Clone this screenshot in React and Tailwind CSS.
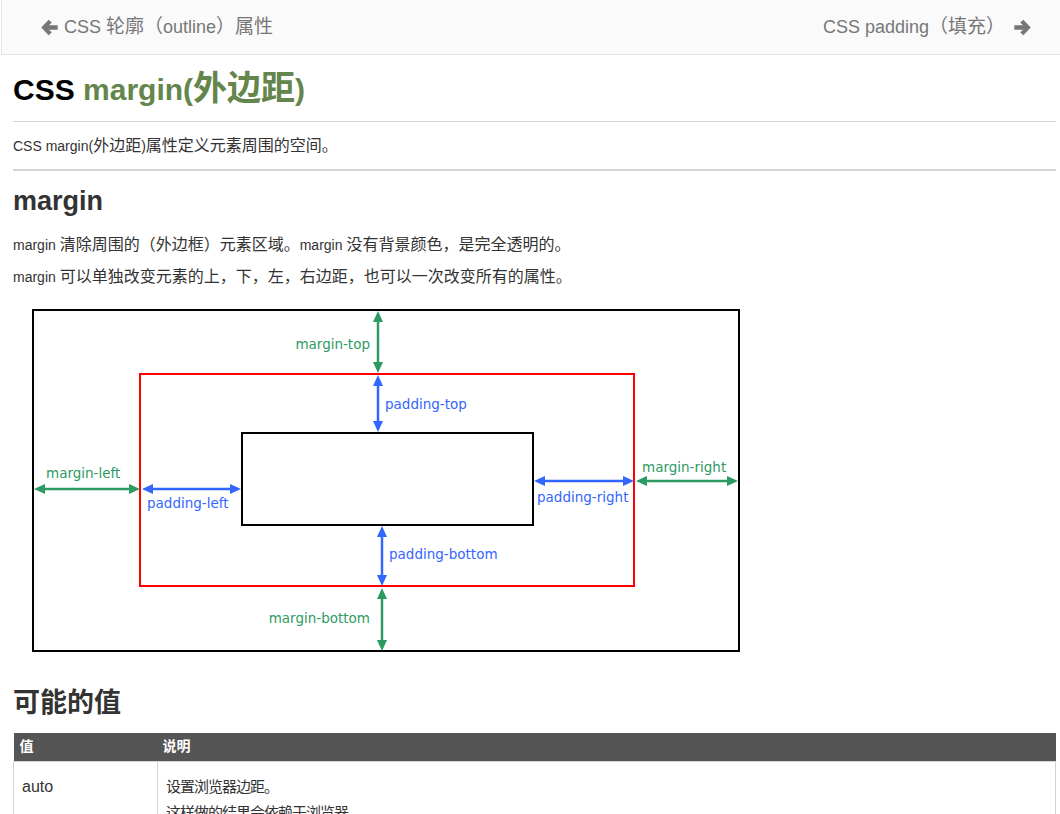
import React from "react";

const FONT = { fontFamily: '"Liberation Sans", Arial, "Noto Sans CJK SC", sans-serif' };
const GREEN = "#2e9a63";
const BLUE = "#3366ff";

// splits a string into latin / CJK runs so the CJK runs can get their own size
const CJK_RE = /([\u3000-\u303f\u4e00-\u9fff\uff00-\uffef]+)/;
function Mixed({ text, cjk }) {
  return text.split(CJK_RE).map((part, i) =>
    i % 2 === 1 ? (
      <span key={i} className={cjk}>
        {part}
      </span>
    ) : (
      part
    )
  );
}

function NavArrow({ dir }) {
  return (
    <svg width="17" height="17" viewBox="0 0 16 16" className="shrink-0">
      <path
        d={
          dir === "left"
            ? "M7.2 1 L0.6 8 L7.2 15 L9.8 12.6 L7 9.8 H15.4 V6.2 H7 L9.8 3.4 Z"
            : "M8.8 1 L15.4 8 L8.8 15 L6.2 12.6 L9 9.8 H0.6 V6.2 H9 L6.2 3.4 Z"
        }
        fill="#777"
        stroke="#777"
        strokeWidth="0.6"
        strokeLinejoin="round"
      />
    </svg>
  );
}

// double-headed arrow between two points (horizontal or vertical)
function Arrow({ x1, y1, x2, y2, color }) {
  const L = 11;
  const W = 5;
  if (x1 === x2) {
    return (
      <g fill={color}>
        <line x1={x1} y1={y1 + L - 1} x2={x2} y2={y2 - L + 1} stroke={color} strokeWidth="2.5" />
        <polygon points={`${x1},${y1} ${x1 - W},${y1 + L} ${x1 + W},${y1 + L}`} />
        <polygon points={`${x2},${y2} ${x2 - W},${y2 - L} ${x2 + W},${y2 - L}`} />
      </g>
    );
  }
  return (
    <g fill={color}>
      <line x1={x1 + L - 1} y1={y1} x2={x2 - L + 1} y2={y2} stroke={color} strokeWidth="2.5" />
      <polygon points={`${x1},${y1} ${x1 + L},${y1 - W} ${x1 + L},${y1 + W}`} />
      <polygon points={`${x2},${y2} ${x2 - L},${y2 - W} ${x2 - L},${y2 + W}`} />
    </g>
  );
}

function BoxModel() {
  const label = { fontFamily: '"DejaVu Sans", sans-serif', fontSize: 13.5 };
  return (
    <svg width="708" height="344" viewBox="0 0 708 344" className="block">
      <rect x="1" y="1" width="706" height="341" fill="white" stroke="black" strokeWidth="2" />
      <rect x="108" y="65" width="494" height="212" fill="none" stroke="#ff0000" strokeWidth="2" />
      <rect x="210" y="124" width="291" height="92" fill="none" stroke="black" strokeWidth="2" />

      <Arrow x1={346} y1={2} x2={346} y2={64} color={GREEN} />
      <Arrow x1={346} y1={66} x2={346} y2={123} color={BLUE} />
      <Arrow x1={2} y1={180} x2={108} y2={180} color={GREEN} />
      <Arrow x1={110} y1={180} x2={209} y2={180} color={BLUE} />
      <Arrow x1={502} y1={172} x2={602} y2={172} color={BLUE} />
      <Arrow x1={604} y1={172} x2={706} y2={172} color={GREEN} />
      <Arrow x1={350} y1={217} x2={350} y2={277} color={BLUE} />
      <Arrow x1={350} y1={279} x2={350} y2={342} color={GREEN} />

      <g style={label}>
        <text x="338" y="40" textAnchor="end" fill={GREEN}>margin-top</text>
        <text x="353" y="100" fill={BLUE}>padding-top</text>
        <text x="14" y="169" fill={GREEN}>margin-left</text>
        <text x="115" y="199" fill={BLUE}>padding-left</text>
        <text x="505" y="193" fill={BLUE}>padding-right</text>
        <text x="610" y="163" fill={GREEN}>margin-right</text>
        <text x="357" y="250" fill={BLUE}>padding-bottom</text>
        <text x="338" y="314" textAnchor="end" fill={GREEN}>margin-bottom</text>
      </g>
    </svg>
  );
}

const P_CJK = "text-[16px] leading-none";

export default function App() {
  return (
    <div className="min-h-[814px] bg-white text-[#333]" style={FONT}>
      <nav className="ml-px flex h-[55px] items-center justify-between border-b border-l border-[#e1e5ec] bg-[#fafafb] pl-[39px] pr-[29px] text-[18px] text-[#777]">
        <a className="flex items-center gap-[6px]">
          <NavArrow dir="left" />
          <span>
            <Mixed text="CSS 轮廓（outline）属性" cjk="text-[19px] leading-none" />
          </span>
        </a>
        <a className="flex items-center gap-[9px]">
          <span>
            <Mixed text="CSS padding（填充）" cjk="text-[19px] leading-none" />
          </span>
          <NavArrow dir="right" />
        </a>
      </nav>

      <main className="pl-[13px] pr-[4px]">
        <h1 className="mt-[15px] text-[30px] font-bold leading-[40px] text-black">
          CSS{" "}
          <span className="text-[#64854c]">
            <Mixed text="margin(外边距)" cjk="text-[34px] leading-none" />
          </span>
        </h1>
        <hr className="mt-[11px] border-t border-[#d4d4d4]" />
        <p className="mt-[14px] text-[14px] leading-[20px]">
          <Mixed text="CSS margin(外边距)属性定义元素周围的空间。" cjk={P_CJK} />
        </p>
        <hr className="mt-[13px] border-t-2 border-[#d4d4d4]" />

        <h2 className="mt-[13px] text-[27px] font-bold leading-[34px]">margin</h2>
        <p className="mt-[17px] text-[14px] leading-[20px]">
          <Mixed text="margin 清除周围的（外边框）元素区域。margin 没有背景颜色，是完全透明的。" cjk={P_CJK} />
        </p>
        <p className="mt-[12px] text-[14px] leading-[20px]">
          <Mixed text="margin 可以单独改变元素的上，下，左，右边距，也可以一次改变所有的属性。" cjk={P_CJK} />
        </p>

        <div className="ml-[19px] mt-[22px]">
          <BoxModel />
        </div>

        <h2 className="mt-[33px] text-[27px] font-bold leading-[34px]">可能的值</h2>

        <table className="mt-[13px] w-full border-collapse text-left">
          <thead>
            <tr className="bg-[#555] text-[14px] text-white">
              <th className="h-[28px] w-[144px] px-[6px] font-bold">值</th>
              <th className="h-[28px] px-[5px] font-bold">说明</th>
            </tr>
          </thead>
          <tbody>
            <tr className="align-top text-[16px]">
              <td className="border border-[#d4d4d4] px-[8px] pt-[12px] leading-[26px]">auto</td>
              <td className="border border-[#d4d4d4] px-[8px] pt-[12px] leading-[26px]">
                <div className="text-[15px] tracking-[-1px]">设置浏览器边距。</div>
                <div className="text-[15px] tracking-[-1px]">这样做的结果会依赖于浏览器。</div>
              </td>
            </tr>
          </tbody>
        </table>
      </main>
    </div>
  );
}
